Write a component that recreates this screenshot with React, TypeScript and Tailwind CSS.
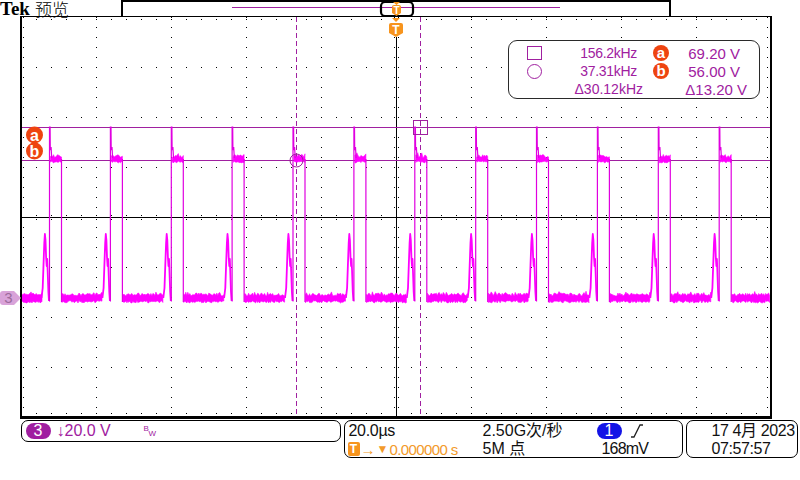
import React from 'react';

const PURPLE = '#a020a0';
const TRACE = '#ff00ff';
const ORANGE = '#f7941d';

function makeRng(seed: number) {
  let s = seed;
  return () => {
    s = (s * 1664525 + 1013904223) % 4294967296;
    return s / 4294967296;
  };
}

const EDGES = Array.from({ length: 12 }, (_, i) => 49.5 + i * 60.88);

function bandPoly(
  x1: number,
  x2: number,
  topMin: number,
  topMax: number,
  botMin: number,
  botMax: number,
  rnd: () => number,
) {
  const top: string[] = [];
  const bot: string[] = [];
  for (let x = x1; x <= x2 + 0.01; x += 1) {
    let t = topMin + rnd() * (topMax - topMin);
    if (rnd() < 0.08) t -= 2;
    top.push(x.toFixed(1) + ' ' + t.toFixed(1));
    const b = botMin + rnd() * (botMax - botMin);
    bot.unshift(x.toFixed(1) + ' ' + b.toFixed(1));
  }
  return 'M' + top.join('L') + 'L' + bot.join('L') + 'Z';
}

function buildWave() {
  const rnd = makeRng(12345);
  const bands: string[] = [];
  const bumps: string[] = [];
  const thin: string[] = [];
  const segs: [number, number][] = [[21, EDGES[0] - 7.5]];
  for (let i = 0; i < EDGES.length; i++) {
    const start = EDGES[i] + 12.5;
    const end = i < EDGES.length - 1 ? EDGES[i + 1] - 7.5 : 770;
    segs.push([start, end]);
  }
  segs.forEach(([a, b]) => bands.push(bandPoly(a, b, 293, 296, 300.5, 303, rnd)));
  EDGES.forEach((x0) => {
    bands.push(bandPoly(x0 + 1, x0 + 12, 154.5, 157.5, 161, 163, rnd));
    const p = [
      [x0 - 8, 298],
      [x0 - 6.8, 288],
      [x0 - 6, 265],
      [x0 - 5.2, 243],
      [x0 - 4.6, 234],
      [x0 - 4, 240],
      [x0 - 3.4, 257],
      [x0 - 2.8, 266],
      [x0 - 2.3, 259],
      [x0 - 1.8, 272],
      [x0 - 1.1, 292],
      [x0 - 0.5, 301],
    ];
    bumps.push('M' + p.map((q) => q[0].toFixed(1) + ' ' + q[1]).join('L'));
    const e = [
      [x0 - 0.5, 301],
      [x0, 301],
      [x0, 127],
      [x0 + 0.6, 127],
      [x0 + 0.8, 150],
      [x0 + 1.6, 147],
      [x0 + 2.2, 158],
    ];
    thin.push('M' + e.map((q) => q[0].toFixed(1) + ' ' + q[1]).join('L'));
    thin.push(`M${(x0 + 12).toFixed(1)} 159L${(x0 + 12).toFixed(1)} 302`);
  });
  return { bands, bumps, thin };
}

const WAVE = buildWave();

function gridDots() {
  let d = '';
  const dot = (x: number, y: number) => {
    d += `M${x} ${y}h1v1h-1z`;
  };
  for (let j = 1; j < 8; j++) {
    if (j === 4) continue;
    const y = 17 + 50 * j;
    for (let x = 21; x <= 771; x += 15) dot(x, y);
  }
  for (let k = 1; k < 10; k++) {
    if (k === 5) continue;
    const x = 21 + 75 * k;
    for (let y = 17; y <= 417; y += 10) dot(x, y);
  }
  for (let x = 21; x <= 771; x += 15) {
    dot(x, 215);
    dot(x, 219);
  }
  for (let y = 17; y <= 417; y += 10) {
    dot(394, y);
    dot(398, y);
  }
  for (let y = 17; y <= 417; y += 10) {
    dot(23, y);
    dot(767, y);
  }
  for (let x = 21; x <= 771; x += 15) {
    dot(x, 19);
    dot(x, 413);
  }
  return d;
}

const DOTS = gridDots();

function TShield({ cx, top }: { cx: number; top: number }) {
  return (
    <g>
      <path d={`M${cx - 4} ${top}L${cx + 4} ${top}L${cx} ${top + 4}Z`} fill={ORANGE} />
      <path
        d={`M${cx - 7} ${top + 7}Q${cx - 7} ${top + 5} ${cx - 5} ${top + 5}L${cx + 5} ${top + 5}Q${cx + 7} ${top + 5} ${cx + 7} ${top + 7}L${cx + 7} ${top + 15}L${cx} ${top + 19}L${cx - 7} ${top + 15}Z`}
        fill={ORANGE}
      />
      <text
        x={cx}
        y={top + 15.5}
        textAnchor="middle"
        fontSize="12"
        fontWeight="bold"
        fill="#fff"
        fontFamily="Liberation Sans, sans-serif"
      >
        T
      </text>
    </g>
  );
}

function Plot() {
  return (
    <svg width="800" height="403" viewBox="0 16 800 403" className="block">
      <path d={DOTS} fill="#000" />
      <rect x="21" y="217" width="750" height="1" fill="#000" />
      <rect x="396" y="37" width="1" height="380" fill="#000" />
      <line x1="21" y1="127.5" x2="770" y2="127.5" stroke={PURPLE} strokeWidth="1" />
      <line x1="21" y1="160.5" x2="770" y2="160.5" stroke={PURPLE} strokeWidth="1" />
      <line x1="296.5" y1="17" x2="296.5" y2="416" stroke={PURPLE} strokeWidth="1" strokeDasharray="5 3" />
      <line x1="420.5" y1="17" x2="420.5" y2="416" stroke={PURPLE} strokeWidth="1" strokeDasharray="5 3" />
      {WAVE.bands.map((d, i) => (
        <path key={'b' + i} d={d} fill={TRACE} stroke={TRACE} strokeWidth="0.6" />
      ))}
      {WAVE.bumps.map((d, i) => (
        <path key={'u' + i} d={d} fill="none" stroke={TRACE} strokeWidth="1.8" strokeLinejoin="round" />
      ))}
      {WAVE.thin.map((d, i) => (
        <path key={'t' + i} d={d} fill="none" stroke="#e000e0" strokeWidth="1.2" />
      ))}
      <rect x="413.5" y="120.5" width="14" height="14" fill="none" stroke={PURPLE} strokeWidth="1" />
      <circle cx="296.5" cy="160.5" r="6.5" fill="none" stroke={PURPLE} strokeWidth="1" />
      <rect x="20" y="16" width="752" height="1" fill="#000" />
      <rect x="20" y="16" width="2" height="403" fill="#000" />
      <rect x="770" y="16" width="2" height="403" fill="#000" />
      <rect x="20" y="416" width="752" height="3" fill="#000" />
      <TShield cx={396} top={18} />
      <circle cx="34.5" cy="151" r="8.5" fill="#ee4410" />
      <circle cx="34.5" cy="135" r="8.5" fill="#ee4410" />
      <text x="34.5" y="140.5" textAnchor="middle" fontSize="16" fontWeight="bold" fill="#fff" fontFamily="Liberation Sans, sans-serif">
        a
      </text>
      <text x="34.5" y="156.5" textAnchor="middle" fontSize="16" fontWeight="bold" fill="#fff" fontFamily="Liberation Sans, sans-serif">
        b
      </text>
      <path d="M0 294Q0 291 3 291L14 291L21 298L14 305L3 305Q0 305 0 302Z" fill="#d9a3d9" />
      <text x="8.5" y="303" textAnchor="middle" fontSize="15" fill="#9c6a9c" fontFamily="Liberation Sans, sans-serif">
        3
      </text>
    </svg>
  );
}

function RecordBar() {
  return (
    <div className="w-[550px] h-[16px] border-x-2 border-t-2 border-black">
      <svg width="546" height="14" viewBox="123 2 546 14" className="block">
        <line x1="232" y1="7.5" x2="560" y2="7.5" stroke={PURPLE} strokeWidth="1" />
        <rect x="381" y="2" width="32" height="14" rx="4" fill="none" stroke="#000" strokeWidth="2.2" />
        <path d="M393 2L400 2L396.5 5Z" fill={ORANGE} />
        <path d="M392 7Q392 5 394 5L399 5Q401 5 401 7L401 13L396.5 16L392 13Z" fill={ORANGE} />
        <text x="396.5" y="14" textAnchor="middle" fontSize="10" fontWeight="bold" fill="#fff" fontFamily="Liberation Sans, sans-serif">
          T
        </text>
      </svg>
    </div>
  );
}

function MeasCircle({ l }: { l: string }) {
  return (
    <div className="w-[16px] h-[16px] rounded-full bg-[#ee4410] text-white font-bold text-[15px] leading-[15px] text-center font-[family-name:Liberation_Sans,sans-serif]">
      {l}
    </div>
  );
}

function Measurements() {
  return (
    <div className="absolute left-[508px] top-[24px] w-[252px] h-[59px] rounded-[9px] border-[1.5px] border-[#2a2a2a] bg-white pt-[3px] text-[#a020a0] leading-none whitespace-nowrap">
      <div className="flex items-center h-[18px]">
        <div className="ml-[18px] w-[15px] h-[14px] border border-[#a020a0]" />
        <div className="w-[95px] text-right text-[14px] tracking-[-0.3px]">156.2kHz</div>
        <div className="ml-[16px]">
          <MeasCircle l="a" />
        </div>
        <div className="w-[71px] text-right text-[15px]">69.20 V</div>
      </div>
      <div className="flex items-center h-[18px]">
        <div className="ml-[18px] w-[15px] h-[15px] rounded-full border border-[#a020a0]" />
        <div className="w-[95px] text-right text-[14px] tracking-[-0.3px]">37.31kHz</div>
        <div className="ml-[16px]">
          <MeasCircle l="b" />
        </div>
        <div className="w-[71px] text-right text-[15px]">56.00 V</div>
      </div>
      <div className="flex items-center h-[18px]">
        <div className="ml-[18px] w-[15px]" />
        <div className="w-[101px] text-right text-[14px]">Δ30.12kHz</div>
        <div className="w-[104px] text-right text-[15px]">Δ13.20 V</div>
      </div>
    </div>
  );
}

function RisingEdge() {
  return (
    <svg width="14" height="16" viewBox="0 0 14 16" className="block">
      <path d="M1 14L4 14L10 2L13 2" fill="none" stroke="#222" strokeWidth="1.3" />
    </svg>
  );
}

function BottomBar() {
  return (
    <div className="flex items-start pt-[1px] text-[16px] leading-none whitespace-nowrap">
      <div className="ml-[21px] w-[320px] h-[22px] rounded-[7px] border-[1.5px] border-black flex items-center text-[#a020a0]">
        <div className="ml-[3.5px] w-[25px] h-[16px] rounded-full bg-[#a01ea0] text-white text-[16px] flex items-center justify-center">
          3
        </div>
        <div className="ml-[6px] w-[87px]">↓20.0 V</div>
        <div className="relative w-[12px] h-[14px] text-[8px]">
          <span className="absolute left-0 top-[1px]">B</span>
          <span className="absolute left-[5px] top-[6px]">W</span>
        </div>
      </div>
      <div className="ml-[3px] w-[339px] h-[38px] rounded-[7px] border-[1.5px] border-black pt-[1px] text-[#111]">
        <div className="flex items-center h-[18px]">
          <div className="ml-[3.5px] w-[134px] tracking-[-0.3px]">20.0µs</div>
          <div className="w-[114px]">2.50G次/秒</div>
          <div className="w-[25px] h-[16px] rounded-full bg-[#1414e6] text-white text-[16px] flex items-center justify-center">
            1
          </div>
          <div className="ml-[8px]">
            <RisingEdge />
          </div>
        </div>
        <div className="flex items-center h-[18px]">
          <div className="ml-[2.5px] w-[135px] flex items-center text-[#f39a2a]">
            <div className="w-[12px] h-[14px] rounded-[2px] bg-[#f7941d] text-white text-[12px] font-bold flex items-center justify-center font-[family-name:Liberation_Sans,sans-serif]">
              T
            </div>
            <span className="ml-[1px] text-[15px] font-bold">→</span>
            <span className="text-[12px] ml-[1px]">▼</span>
            <span className="ml-[1px] text-[15px] tracking-[-0.6px]">0.000000 s</span>
          </div>
          <div className="w-[114px]">5M 点</div>
          <div className="ml-[5px] tracking-[-0.8px]">168mV</div>
        </div>
      </div>
      <div className="ml-[3px] w-[112px] h-[38px] rounded-[7px] border-[1.5px] border-black pt-[1px] text-[#111] tracking-[-0.4px]">
        <div className="flex items-center h-[18px] pl-[24.5px]">17 4月 2023</div>
        <div className="flex items-center h-[18px] pl-[24.5px]">07:57:57</div>
      </div>
    </div>
  );
}

export default function App() {
  return (
    <div className="w-[800px] h-[480px] bg-white overflow-hidden font-[family-name:Liberation_Sans,Noto_Sans_CJK_SC,sans-serif]">
      <div className="flex h-[16px] items-start">
        <div className="w-[121px] flex items-start h-[16px] leading-[16px] whitespace-nowrap">
          <span className="font-[family-name:Liberation_Serif,serif] font-bold text-[19px] leading-[17px] text-black">Tek</span>
          <span className="ml-[5px] text-[17px] leading-[17px] text-black font-[family-name:Noto_Sans_CJK_SC,sans-serif] font-light">预览</span>
        </div>
        <RecordBar />
      </div>
      <div className="relative h-[403px]">
        <Plot />
        <Measurements />
      </div>
      <BottomBar />
    </div>
  );
}
